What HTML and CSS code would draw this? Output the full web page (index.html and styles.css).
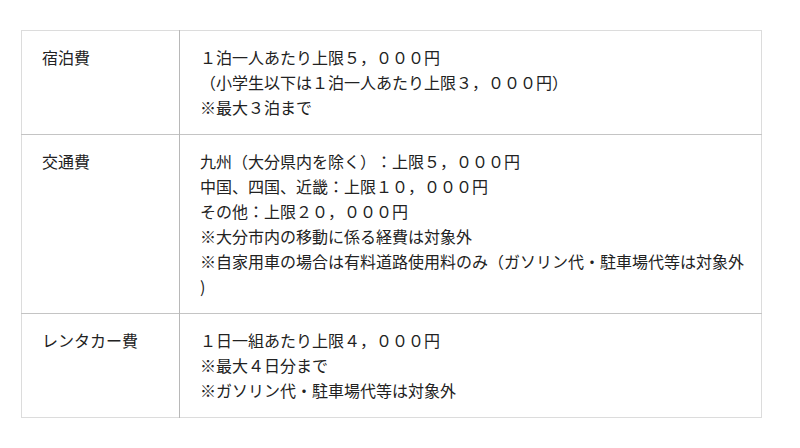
FILE: index.html
```html
<!DOCTYPE html>
<html lang="ja">
<head>
<meta charset="utf-8">
<link rel="stylesheet" href="styles.css">
</head>
<body>
<div class="wrap">
<table class="costs">
  <tr>
    <th class="label">宿泊費</th>
    <td class="detail">１泊一人あたり上限５，０００円<br>（小学生以下は１泊一人あたり上限３，０００円）<br>※最大３泊まで</td>
  </tr>
  <tr>
    <th class="label">交通費</th>
    <td class="detail">九州（大分県内を除く）：上限５，０００円<br>中国、四国、近畿：上限１０，０００円<br>その他：上限２０，０００円<br>※大分市内の移動に係る経費は対象外<br>※自家用車の場合は有料道路使用料のみ（ガソリン代・駐車場代等は対象外)</td>
  </tr>
  <tr>
    <th class="label">レンタカー費</th>
    <td class="detail">１日一組あたり上限４，０００円<br>※最大４日分まで<br>※ガソリン代・駐車場代等は対象外</td>
  </tr>
</table>
</div>
</body>
</html>
```

FILE: styles.css
```css
html, body {
  margin: 0;
  padding: 0;
  background: #fff;
}
body {
  font-family: "Noto Sans CJK JP", "Noto Sans", sans-serif;
  font-size: 16px;
  color: #222;
  text-spacing-trim: space-all;
}
.wrap {
  padding: 30px 38px 0 21px;
}
.costs {
  width: 741px;
  table-layout: fixed;
  border-collapse: collapse;
  border: 1px solid #dcdcdc;
}
.costs tr + tr th,
.costs tr + tr td {
  border-top: 1px solid #c4c4c4;
}
.label {
  width: 117px;
  text-align: left;
  font-weight: normal;
  vertical-align: top;
  padding: 14px 20px 14px 20px;
  line-height: 25px;
  border-right: 1px solid #b8b8b8;
}
.detail {
  vertical-align: top;
  padding: 14px 16px 14px 20px;
  line-height: 25px;
  line-break: anywhere;
}
```
